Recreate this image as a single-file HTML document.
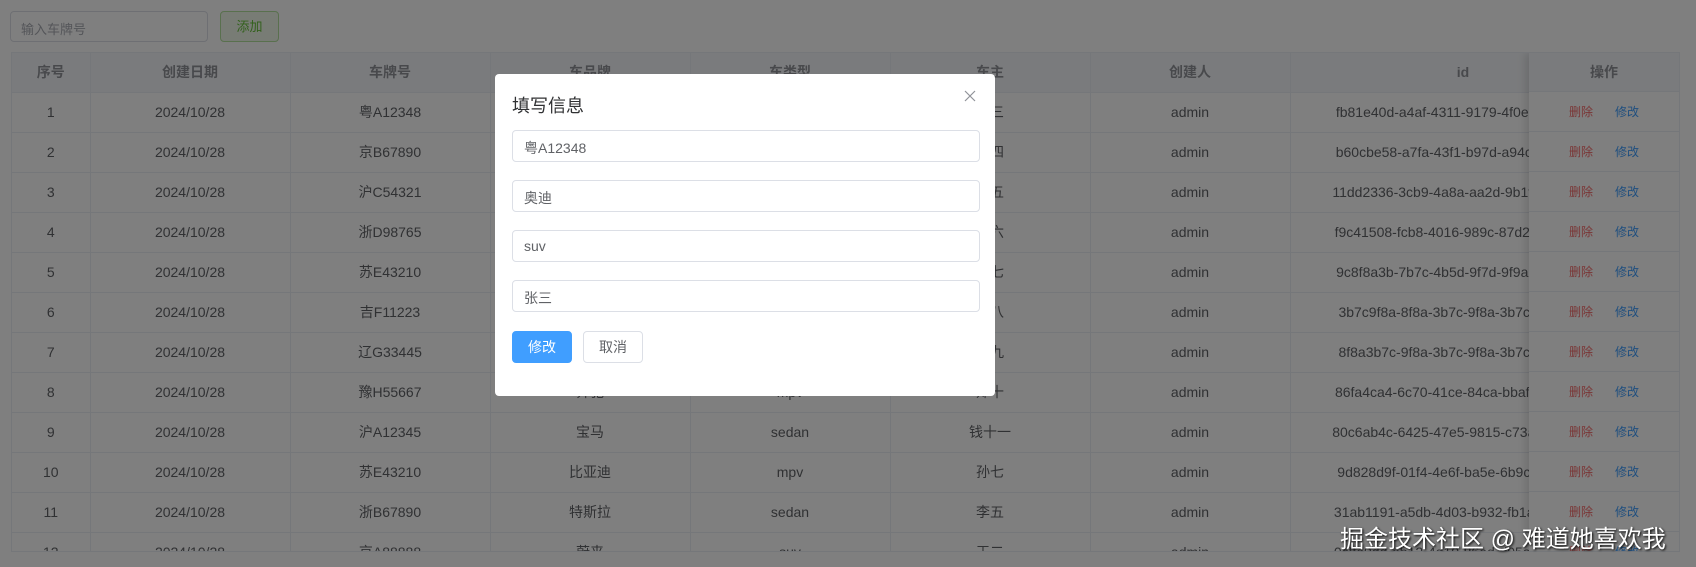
<!DOCTYPE html>
<html><head><meta charset="utf-8"><style>
*{box-sizing:border-box;margin:0;padding:0}
body{width:1696px;height:567px;overflow:hidden;background:#fff;font-family:"Liberation Sans","Noto Sans CJK SC",sans-serif;position:relative;color:#606266}
.search{position:absolute;left:10px;top:11px;width:198px;height:31px;border:1px solid #dcdfe6;border-radius:4px;font-size:13px;color:#a8abb2;padding:7px 10px}
.add{position:absolute;left:220px;top:11px;width:59px;height:31px;border:1px solid #b3e19d;background:#f0f9eb;color:#67c23a;border-radius:4px;font-size:13px;text-align:center;line-height:29px}
.tbl{position:absolute;left:11px;top:52px;width:1669px;height:500px;overflow:hidden;border:1px solid #ebeef5}
table{border-collapse:collapse;table-layout:fixed;font-size:14px}
td,th{height:40px;border-right:1px solid #ebeef5;border-bottom:1px solid #ebeef5;text-align:center;white-space:nowrap;overflow:hidden}
th{background:#f5f7fa;color:#909399;font-weight:bold;height:39px}
.fix{position:absolute;right:0;top:0;width:150px;background:#fff;box-shadow:-4px 0 8px rgba(0,0,0,.12)}
.fix div{height:40px;border-bottom:1px solid #ebeef5;font-size:12px;display:flex;align-items:center;justify-content:center;gap:22px}
.fix .h{background:#f5f7fa;color:#909399;font-weight:bold;font-size:14px;height:39px}
.r{color:#f56c6c}.b{color:#409eff}
.mask{position:absolute;inset:0;background:rgba(0,0,0,.5)}
.dlg{position:absolute;left:495px;top:74px;width:500px;height:322px;background:#fff;border-radius:4px}
.dlg h3{position:absolute;left:17px;top:18px;font-size:18px;font-weight:normal;color:#303133}
.x{position:absolute;left:469px;top:16px}
.in{position:absolute;left:17px;width:468px;height:32px;border:1px solid #dcdfe6;border-radius:4px;font-size:14px;padding:7px 11px;color:#606266}
.btn{position:absolute;top:257px;height:32px;width:60px;border-radius:4px;font-size:14px;text-align:center;line-height:30px}
.wm{position:absolute;left:1340px;top:519px;font-size:24px;color:#fff;text-shadow:1px 1px 2px #000}
</style></head><body>
<div class="search">输入车牌号</div>
<div class="add">添加</div>
<div class="tbl">
<table>
<colgroup><col style="width:78px"><col style="width:200px"><col style="width:200px"><col style="width:200px"><col style="width:200px"><col style="width:200px"><col style="width:200px"><col style="width:346px"></colgroup>
<tr><th>序号</th><th>创建日期</th><th>车牌号</th><th>车品牌</th><th>车类型</th><th>车主</th><th>创建人</th><th>id</th></tr>
<tr><td>1</td><td>2024/10/28</td><td>粤A12348</td><td>奥迪</td><td>suv</td><td>张三</td><td>admin</td><td>fb81e40d-a4af-4311-9179-4f0e2b8c1d3a</td></tr>
<tr><td>2</td><td>2024/10/28</td><td>京B67890</td><td>宝马</td><td>sedan</td><td>李四</td><td>admin</td><td>b60cbe58-a7fa-43f1-b97d-a94c31f2e8d0</td></tr>
<tr><td>3</td><td>2024/10/28</td><td>沪C54321</td><td>奔驰</td><td>suv</td><td>王五</td><td>admin</td><td>11dd2336-3cb9-4a8a-aa2d-9b1f7c6e5a42</td></tr>
<tr><td>4</td><td>2024/10/28</td><td>浙D98765</td><td>丰田</td><td>sedan</td><td>赵六</td><td>admin</td><td>f9c41508-fcb8-4016-989c-87d2a1b3c4e5</td></tr>
<tr><td>5</td><td>2024/10/28</td><td>苏E43210</td><td>本田</td><td>mpv</td><td>孙七</td><td>admin</td><td>9c8f8a3b-7b7c-4b5d-9f7d-9f9a8b7c6d5e</td></tr>
<tr><td>6</td><td>2024/10/28</td><td>吉F11223</td><td>大众</td><td>suv</td><td>周八</td><td>admin</td><td>3b7c9f8a-8f8a-3b7c-9f8a-3b7c9f8a3b7c</td></tr>
<tr><td>7</td><td>2024/10/28</td><td>辽G33445</td><td>福特</td><td>sedan</td><td>吴九</td><td>admin</td><td>8f8a3b7c-9f8a-3b7c-9f8a-3b7c9f8a3b7c</td></tr>
<tr><td>8</td><td>2024/10/28</td><td>豫H55667</td><td>奔驰</td><td>mpv</td><td>郑十</td><td>admin</td><td>86fa4ca4-6c70-41ce-84ca-bbaf12e3d4c5</td></tr>
<tr><td>9</td><td>2024/10/28</td><td>沪A12345</td><td>宝马</td><td>sedan</td><td>钱十一</td><td>admin</td><td>80c6ab4c-6425-47e5-9815-c73a2b1d0e9f</td></tr>
<tr><td>10</td><td>2024/10/28</td><td>苏E43210</td><td>比亚迪</td><td>mpv</td><td>孙七</td><td>admin</td><td>9d828d9f-01f4-4e6f-ba5e-6b9c8d7e6f5a</td></tr>
<tr><td>11</td><td>2024/10/28</td><td>浙B67890</td><td>特斯拉</td><td>sedan</td><td>李五</td><td>admin</td><td>31ab1191-a5db-4d03-b932-fb1a2c3d4e5f</td></tr>
<tr><td>12</td><td>2024/10/28</td><td>京A88888</td><td>蔚来</td><td>suv</td><td>王二</td><td>admin</td><td>0cffe9dd-eb12-4d10-86ed-d05a1b2c3d4e</td></tr>
</table>
<div class="fix">
<div class="h">操作</div>
<div><span class="r">删除</span><span class="b">修改</span></div>
<div><span class="r">删除</span><span class="b">修改</span></div>
<div><span class="r">删除</span><span class="b">修改</span></div>
<div><span class="r">删除</span><span class="b">修改</span></div>
<div><span class="r">删除</span><span class="b">修改</span></div>
<div><span class="r">删除</span><span class="b">修改</span></div>
<div><span class="r">删除</span><span class="b">修改</span></div>
<div><span class="r">删除</span><span class="b">修改</span></div>
<div><span class="r">删除</span><span class="b">修改</span></div>
<div><span class="r">删除</span><span class="b">修改</span></div>
<div><span class="r">删除</span><span class="b">修改</span></div>
<div><span class="r">删除</span><span class="b">修改</span></div>
</div>
</div>
<div class="mask"></div>
<div class="dlg">
<h3>填写信息</h3>
<svg class="x" width="12" height="12" viewBox="0 0 12 12"><path d="M1 1L11 11M11 1L1 11" stroke="#909399" stroke-width="1.2"/></svg>
<div class="in" style="top:56px">粤A12348</div>
<div class="in" style="top:106px">奥迪</div>
<div class="in" style="top:156px">suv</div>
<div class="in" style="top:206px">张三</div>
<div class="btn" style="left:17px;background:#409eff;color:#fff;border:1px solid #409eff">修改</div>
<div class="btn" style="left:88px;border:1px solid #dcdfe6;color:#606266">取消</div>
</div>
<div class="wm">掘金技术社区 @ 难道她喜欢我</div>
</body></html>
